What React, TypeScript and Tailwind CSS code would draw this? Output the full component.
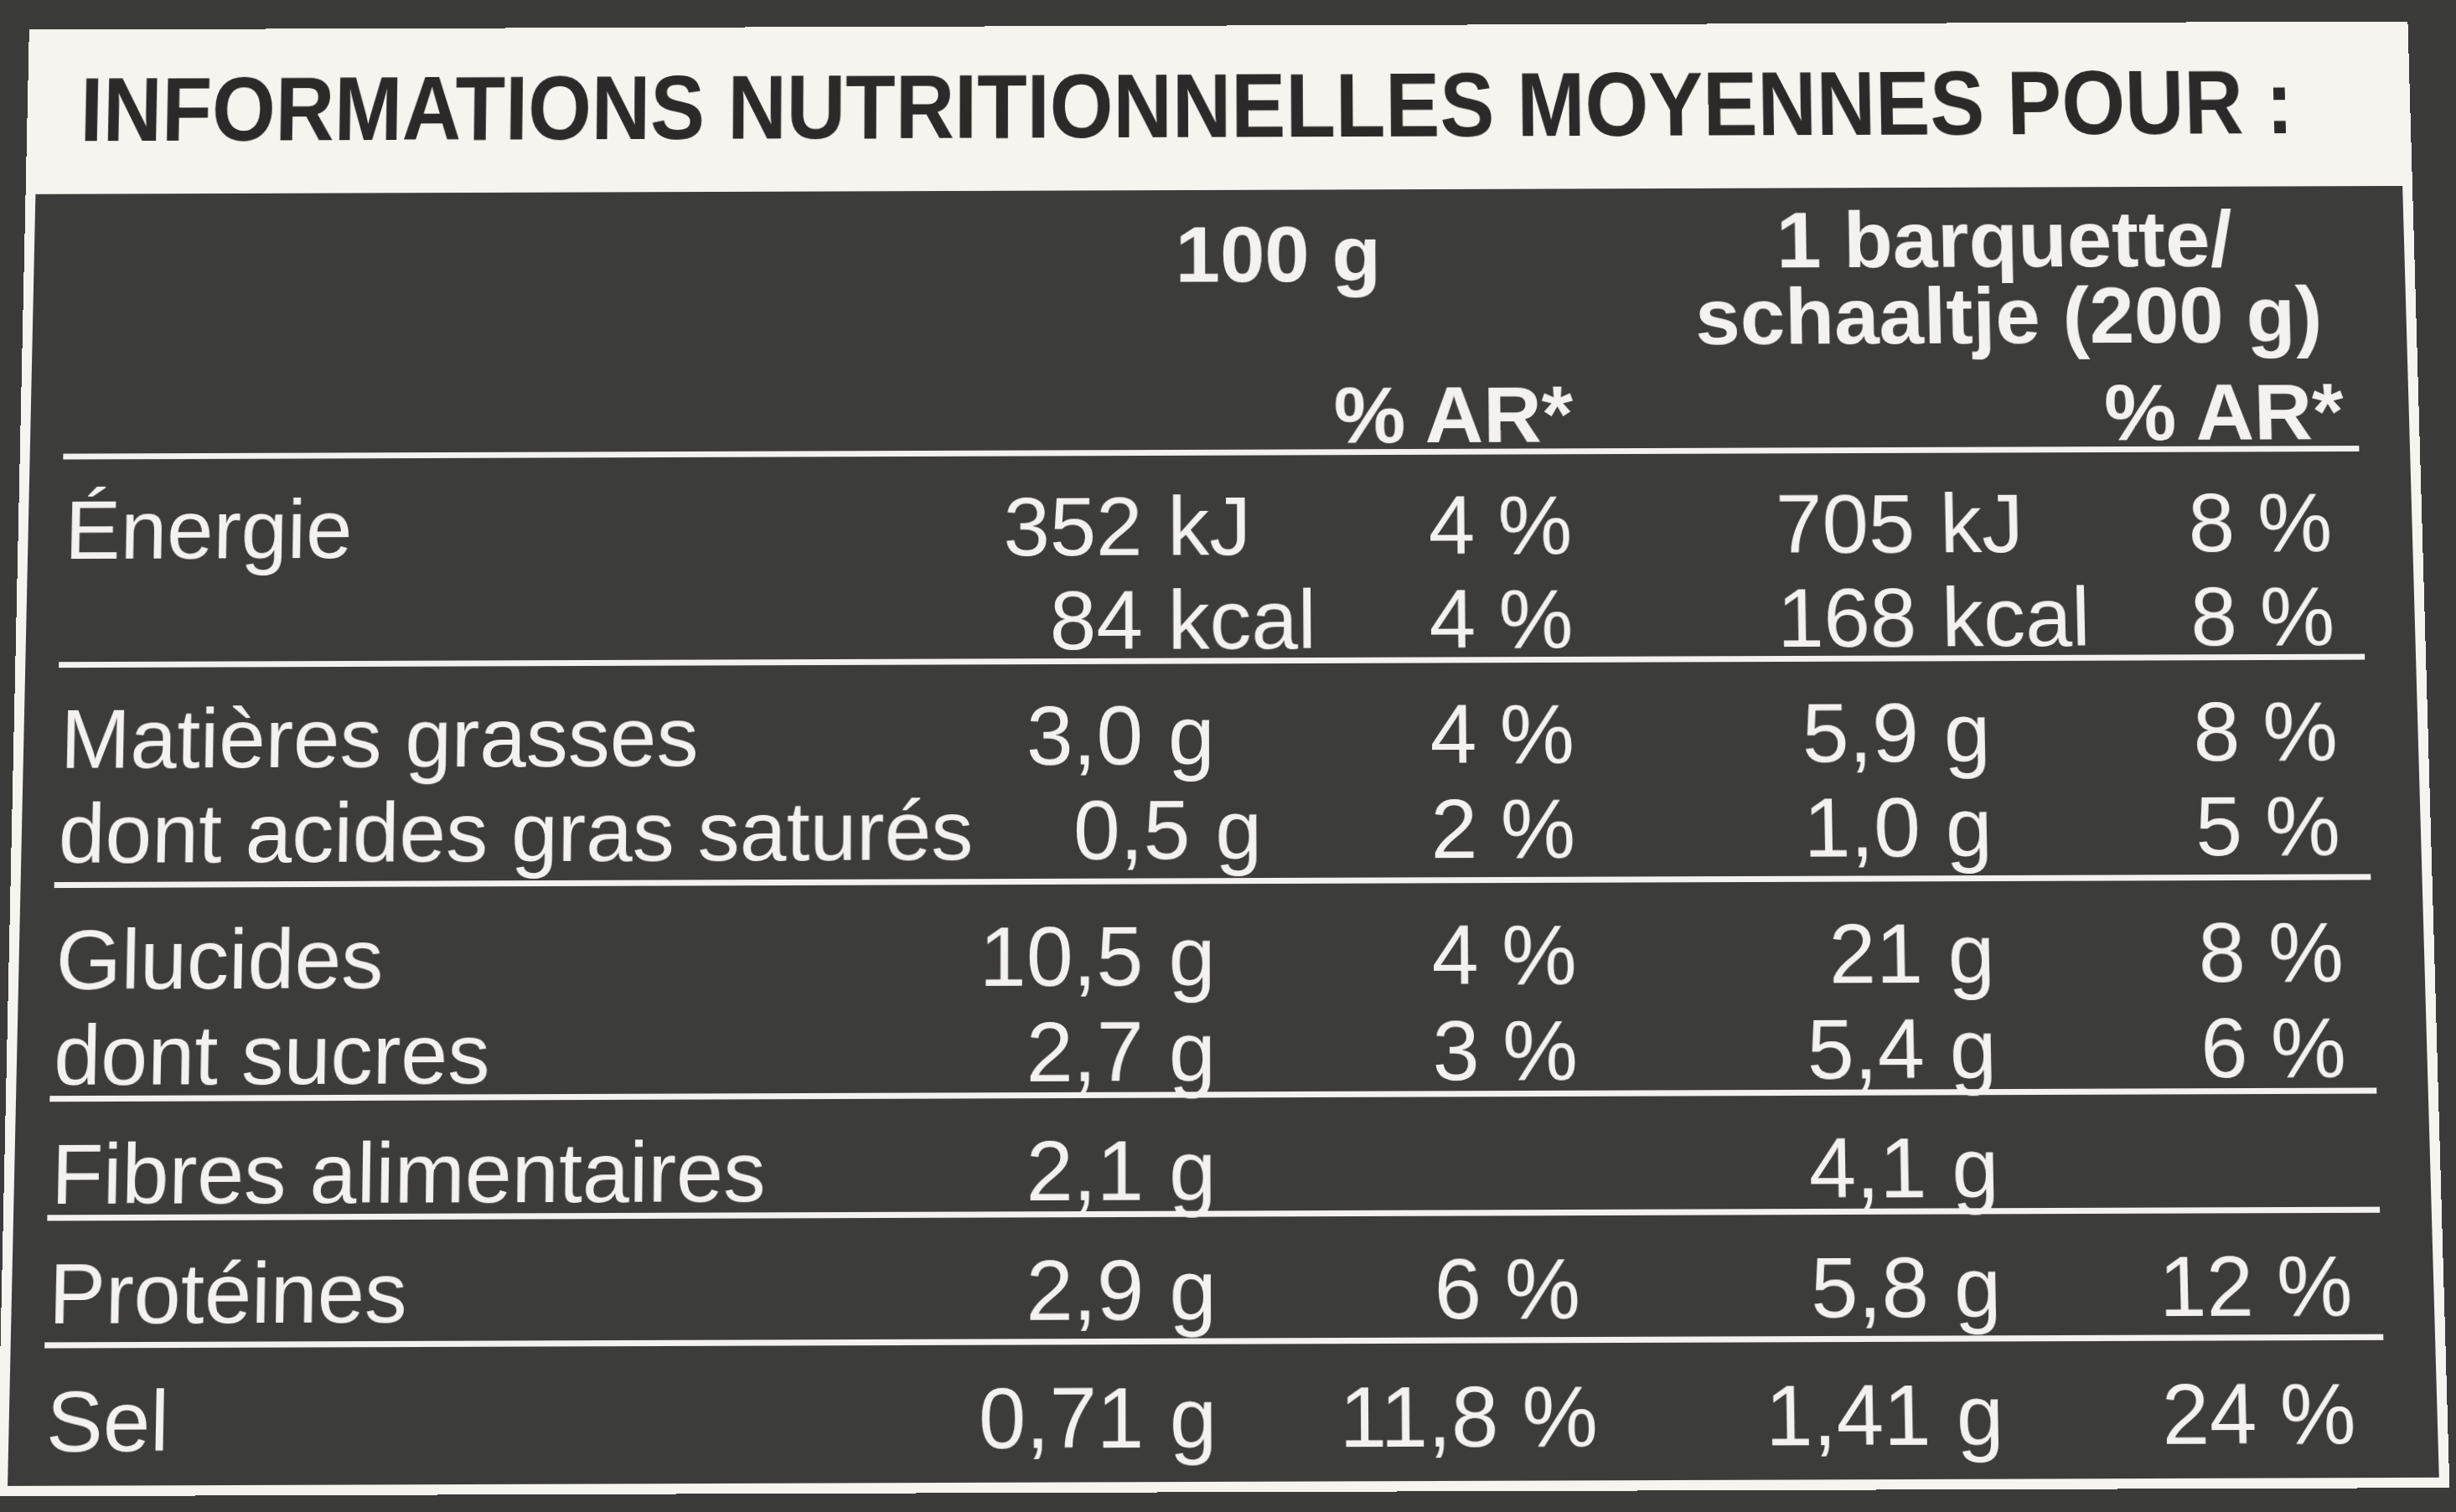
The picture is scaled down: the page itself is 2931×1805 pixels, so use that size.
import React from "react";

type Row = {
  label: string;
  n1: string;
  u1: string;
  p1: string;
  n2: string;
  u2: string;
  p2: string;
  shift?: boolean;
};

const sections: { h: string; rows: Row[] }[] = [
  {
    h: "h-[251px]",
    rows: [
      { label: "Énergie", n1: "352", u1: "kJ", p1: "4 %", n2: "705", u2: "kJ", p2: "8 %" },
      { label: "", n1: "84", u1: "kcal", p1: "4 %", n2: "168", u2: "kcal", p2: "8 %" },
    ],
  },
  {
    h: "h-[263px]",
    rows: [
      { label: "Matières grasses", n1: "3,0", u1: "g", p1: "4 %", n2: "5,9", u2: "g", p2: "8 %" },
      { label: "dont acides gras saturés", n1: "0,5", u1: "g", p1: "2 %", n2: "1,0", u2: "g", p2: "5 %", shift: true },
    ],
  },
  {
    h: "h-[253px]",
    rows: [
      { label: "Glucides", n1: "10,5", u1: "g", p1: "4 %", n2: "21", u2: "g", p2: "8 %" },
      { label: "dont sucres", n1: "2,7", u1: "g", p1: "3 %", n2: "5,4", u2: "g", p2: "6 %" },
    ],
  },
  {
    h: "h-[140px]",
    rows: [{ label: "Fibres alimentaires", n1: "2,1", u1: "g", p1: "", n2: "4,1", u2: "g", p2: "" }],
  },
  {
    h: "h-[149px]",
    rows: [{ label: "Protéines", n1: "2,9", u1: "g", p1: "6 %", n2: "5,8", u2: "g", p2: "12 %" }],
  },
  {
    h: "h-[167px]",
    rows: [{ label: "Sel", n1: "0,71", u1: "g", p1: "11,8 %", n2: "1,41", u2: "g", p2: "24 %" }],
  },
];

function DataRow({ r }: { r: Row }) {
  return (
    <div className="grid grid-cols-[1057px_469px_285px_411px_230px_270px] h-[113px] leading-[113px] whitespace-nowrap">
      <div className="pl-[4px]">{r.label}</div>
      <div>
        <span className={`inline-block w-[239px] text-right ${r.shift ? "ml-[56px]" : ""}`}>{r.n1}</span>
        <span className="pl-[30px]">{r.u1}</span>
      </div>
      <div className="text-right">{r.p1}</div>
      <div className="text-right">{r.n2}</div>
      <div className="pl-[30px]">{r.u2}</div>
      <div className="text-right">{r.p2}</div>
    </div>
  );
}

export default function App() {
  return (
    <div className="w-[2931px] h-[1805px] bg-[#3b3b3a] overflow-hidden pt-[16px] pl-[16px] perspective-[3000px]">
      <div className="w-[2882px] h-[1753px] border-[12px] border-[#f5f4ef] bg-[#3c3c3b] flex flex-col rotate-x-[3deg] -rotate-[0.2deg]">
        {/* white title band */}
        <div className="h-[190px] bg-[#f5f4ef] pt-[32px] pl-[52px] shrink-0">
          <span
            className="inline-block origin-left scale-x-[0.882] text-[112px] leading-[110px] font-bold text-[#2b2a28] whitespace-nowrap"
            style={{ fontFamily: '"Liberation Sans", Arial, sans-serif' }}
          >
            INFORMATIONS NUTRITIONNELLES MOYENNES POUR :
          </span>
        </div>

        {/* table */}
        <div
          className="flex flex-col text-[#f3f2ee]"
          style={{ fontFamily: '"Liberation Sans", Arial, sans-serif' }}
        >
          {/* column headings */}
          <div className="h-[316px] ml-[40px] w-[2757px] shrink-0 pt-[17px]">
            <div className="grid grid-cols-[1260px_400px_302px_748px] font-bold text-[97px] leading-[93px] whitespace-nowrap">
              <div />
              <div className="text-center mt-[15px]">100 g</div>
              <div />
              <div className="text-center">
                1 barquette/
                <br />
                schaaltje (200 g)
              </div>
            </div>
            <div className="mt-[25px] grid grid-cols-[1057px_469px_285px_411px_230px_270px] font-bold text-[97px] leading-[93px] whitespace-nowrap">
              <div />
              <div />
              <div className="text-right pr-[8px]">% AR*</div>
              <div />
              <div />
              <div className="text-right -mr-[14px]">% AR*</div>
            </div>
          </div>

          {sections.map((s, i) => (
            <div
              key={i}
              className={`${s.h} ml-[40px] w-[2757px] border-t-[7px] border-[#f3f2ee] pt-[29px] text-[100px] shrink-0`}
            >
              {s.rows.map((r, j) => (
                <DataRow key={j} r={r} />
              ))}
            </div>
          ))}
        </div>
      </div>
    </div>
  );
}
